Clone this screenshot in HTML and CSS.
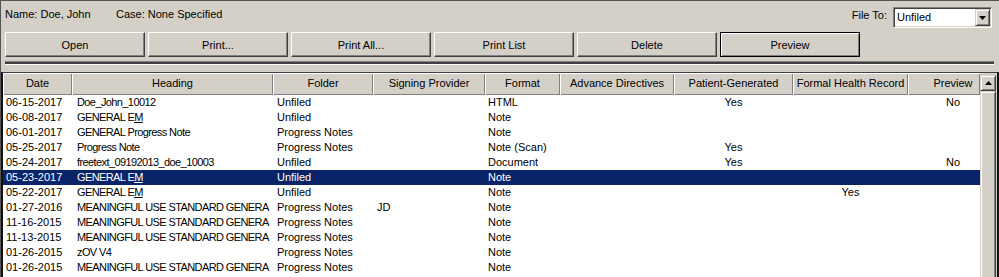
FILE: index.html
```html
<!DOCTYPE html>
<html>
<head>
<meta charset="utf-8">
<link rel="stylesheet" href="styles.css">
</head>
<body>
<div class="window">
  <div class="toprow">
    <span class="info name">Name: Doe, John</span>
    <span class="info">Case: None Specified</span>
    <span class="fileto">File To:</span>
    <div class="combo">
      <span class="combo-value">Unfiled</span>
      <span class="combo-btn"><svg width="7" height="4" viewBox="0 0 7 4"><path d="M0 0H7L3.5 4Z" fill="#000"/></svg></span>
    </div>
  </div>
  <div class="buttons">
    <button class="btn">Open</button>
    <button class="btn">Print...</button>
    <button class="btn">Print All...</button>
    <button class="btn">Print List</button>
    <button class="btn">Delete</button>
    <button class="btn btn-default">Preview</button>
  </div>
  <div class="separator"></div>
  <div class="table">
    <div class="grid">
      <div class="hdr">
        <div class="hcell">Date</div>
        <div class="hcell">Heading</div>
        <div class="hcell">Folder</div>
        <div class="hcell">Signing Provider</div>
        <div class="hcell">Format</div>
        <div class="hcell">Advance Directives</div>
        <div class="hcell">Patient-Generated</div>
        <div class="hcell">Formal Health Record</div>
        <div class="hcell c-prev">Preview</div>
      </div>
      <div class="row"><div class="cell c-date">06-15-2017</div><div class="cell c-head">Doe_John_10012</div><div class="cell c-fold">Unfiled</div><div class="cell c-sign"></div><div class="cell c-fmt">HTML</div><div class="cell"></div><div class="cell c-center">Yes</div><div class="cell c-center"></div><div class="cell c-center c-prev">No</div></div>
      <div class="row"><div class="cell c-date">06-08-2017</div><div class="cell c-head">GENERAL E<u>M</u></div><div class="cell c-fold">Unfiled</div><div class="cell c-sign"></div><div class="cell c-fmt">Note</div><div class="cell"></div><div class="cell c-center"></div><div class="cell c-center"></div><div class="cell c-center c-prev"></div></div>
      <div class="row"><div class="cell c-date">06-01-2017</div><div class="cell c-head">GENERAL Progress Note</div><div class="cell c-fold">Progress Notes</div><div class="cell c-sign"></div><div class="cell c-fmt">Note</div><div class="cell"></div><div class="cell c-center"></div><div class="cell c-center"></div><div class="cell c-center c-prev"></div></div>
      <div class="row"><div class="cell c-date">05-25-2017</div><div class="cell c-head">Progress Note</div><div class="cell c-fold">Progress Notes</div><div class="cell c-sign"></div><div class="cell c-fmt">Note (Scan)</div><div class="cell"></div><div class="cell c-center">Yes</div><div class="cell c-center"></div><div class="cell c-center c-prev"></div></div>
      <div class="row"><div class="cell c-date">05-24-2017</div><div class="cell c-head">freetext_09192013_doe_10003</div><div class="cell c-fold">Unfiled</div><div class="cell c-sign"></div><div class="cell c-fmt">Document</div><div class="cell"></div><div class="cell c-center">Yes</div><div class="cell c-center"></div><div class="cell c-center c-prev">No</div></div>
      <div class="row selected"><div class="cell c-date">05-23-2017</div><div class="cell c-head">GENERAL E<u>M</u></div><div class="cell c-fold">Unfiled</div><div class="cell c-sign"></div><div class="cell c-fmt">Note</div><div class="cell"></div><div class="cell c-center"></div><div class="cell c-center"></div><div class="cell c-center c-prev"></div></div>
      <div class="row"><div class="cell c-date">05-22-2017</div><div class="cell c-head">GENERAL E<u>M</u></div><div class="cell c-fold">Unfiled</div><div class="cell c-sign"></div><div class="cell c-fmt">Note</div><div class="cell"></div><div class="cell c-center"></div><div class="cell c-center">Yes</div><div class="cell c-center c-prev"></div></div>
      <div class="row"><div class="cell c-date">01-27-2016</div><div class="cell c-head">MEANINGFUL USE STANDARD GENERA</div><div class="cell c-fold">Progress Notes</div><div class="cell c-sign">JD</div><div class="cell c-fmt">Note</div><div class="cell"></div><div class="cell c-center"></div><div class="cell c-center"></div><div class="cell c-center c-prev"></div></div>
      <div class="row"><div class="cell c-date">11-16-2015</div><div class="cell c-head">MEANINGFUL USE STANDARD GENERA</div><div class="cell c-fold">Progress Notes</div><div class="cell c-sign"></div><div class="cell c-fmt">Note</div><div class="cell"></div><div class="cell c-center"></div><div class="cell c-center"></div><div class="cell c-center c-prev"></div></div>
      <div class="row"><div class="cell c-date">11-13-2015</div><div class="cell c-head">MEANINGFUL USE STANDARD GENERA</div><div class="cell c-fold">Progress Notes</div><div class="cell c-sign"></div><div class="cell c-fmt">Note</div><div class="cell"></div><div class="cell c-center"></div><div class="cell c-center"></div><div class="cell c-center c-prev"></div></div>
      <div class="row"><div class="cell c-date">01-26-2015</div><div class="cell c-head">zOV V4</div><div class="cell c-fold">Progress Notes</div><div class="cell c-sign"></div><div class="cell c-fmt">Note</div><div class="cell"></div><div class="cell c-center"></div><div class="cell c-center"></div><div class="cell c-center c-prev"></div></div>
      <div class="row"><div class="cell c-date">01-26-2015</div><div class="cell c-head">MEANINGFUL USE STANDARD GENERA</div><div class="cell c-fold">Progress Notes</div><div class="cell c-sign"></div><div class="cell c-fmt">Note</div><div class="cell"></div><div class="cell c-center"></div><div class="cell c-center"></div><div class="cell c-center c-prev"></div></div>
    </div>
    <div class="vscroll">
      <div class="sb-up"><svg width="7" height="4" viewBox="0 0 7 4"><path d="M0 4H7L3.5 0Z" fill="#000"/></svg></div>
      <div class="sb-thumb"></div>
    </div>
  </div>
</div>
</body>
</html>
```
FILE: styles.css
```css
* { box-sizing: border-box; }
html, body { margin: 0; padding: 0; }
body {
  width: 999px;
  height: 277px;
  overflow: hidden;
  background: #d4d0c8;
  font-family: "Liberation Sans", Arial, sans-serif;
  font-size: 11px;
  color: #000;
}
.window {
  height: 277px;
  border-top: 1px solid #555;
  border-left: 1px solid #555;
  display: flex;
  flex-direction: column;
}
.toprow {
  display: flex;
  align-items: flex-start;
  height: 21px;
  margin-top: 6px;
  padding-left: 4px;
  padding-right: 7px;
  flex: none;
}
.info { line-height: 14px; white-space: nowrap; }
.name { width: 111px; }
.fileto { margin-left: auto; margin-right: 6px; line-height: 14px; margin-top: 1px; }
.combo {
  width: 99px;
  height: 21px;
  display: flex;
  background: #fff;
  border: 1px solid;
  border-color: #808080 #fff #fff #808080;
  box-shadow: inset 1px 1px 0 #404040, inset -1px -1px 0 #d4d0c8;
  padding: 1px;
}
.combo-value { flex: 1; padding-left: 2px; line-height: 17px; }
.combo-btn {
  width: 15px;
  height: 17px;
  background: #d4d0c8;
  border: 1px solid;
  border-color: #d4d0c8 #404040 #404040 #d4d0c8;
  box-shadow: inset 1px 1px 0 #fff, inset -1px -1px 0 #808080;
  display: flex;
  align-items: center;
  justify-content: center;
}
.buttons {
  display: flex;
  gap: 3px;
  margin-top: 4px;
  padding-left: 4px;
  flex: none;
}
.btn {
  width: 140px;
  height: 25px;
  padding: 0;
  font: inherit;
  color: #000;
  background: #d4d0c8;
  border: 1px solid;
  border-color: #fff #404040 #404040 #fff;
  box-shadow: inset -1px -1px 0 #808080;
}
.btn-default {
  border-color: #000;
  box-shadow: inset 1px 1px 0 #fff, inset -1px -1px 0 #808080;
}
.separator {
  flex: none;
  margin: 4px 0 0 4px;
  width: 989px;
  height: 4px;
  background: #404040;
  border-top: 1px solid #808080;
  border-bottom: 1px solid #fff;
}
.table {
  flex: 1;
  min-height: 0;
  margin-top: 7px;
  display: flex;
  background: #fff;
  border-top: 1px solid #404040;
  border-left: 2px solid #111;
  border-right: 2px solid #111;
  overflow: hidden;
}
.grid {
  --cols: 69px 201px 100px 112px 75px 114px 119px 115px 72px;
  width: 977px;
  flex: none;
}
.hdr, .row {
  display: grid;
  grid-template-columns: var(--cols);
}
.hdr { height: 22px; background: #d4d0c8; }
.hcell {
  text-align: center;
  line-height: 21px;
  white-space: nowrap;
  overflow: hidden;
  box-shadow: inset 1px 1px 0 #fff, inset -1px -1px 0 #808080;
}
.row { height: 15px; line-height: 15px; }
.cell { white-space: nowrap; overflow: hidden; }
.c-date { padding-left: 3px; }
.c-head { padding-left: 5px; letter-spacing: -0.6px; }
.c-fold { padding-left: 4px; }
.c-sign { padding-left: 4px; }
.c-fmt { padding-left: 3px; }
.c-center { text-align: center; }
.c-prev { padding-left: 18px; text-align: center; }
.selected { background: #0a246a; color: #fff; }
.vscroll {
  width: 17px;
  flex: none;
  background: #d4d0c8;
  display: flex;
  flex-direction: column;
  padding: 2px 1px 0 0;
}
.sb-up, .sb-thumb {
  width: 16px;
  background: #d4d0c8;
  border: 1px solid;
  border-color: #d4d0c8 #404040 #404040 #d4d0c8;
  box-shadow: inset 1px 1px 0 #fff, inset -1px -1px 0 #808080;
}
.sb-up {
  height: 16px;
  display: flex;
  align-items: center;
  justify-content: center;
  flex: none;
}
.sb-thumb { flex: 1; min-height: 250px; }
```
